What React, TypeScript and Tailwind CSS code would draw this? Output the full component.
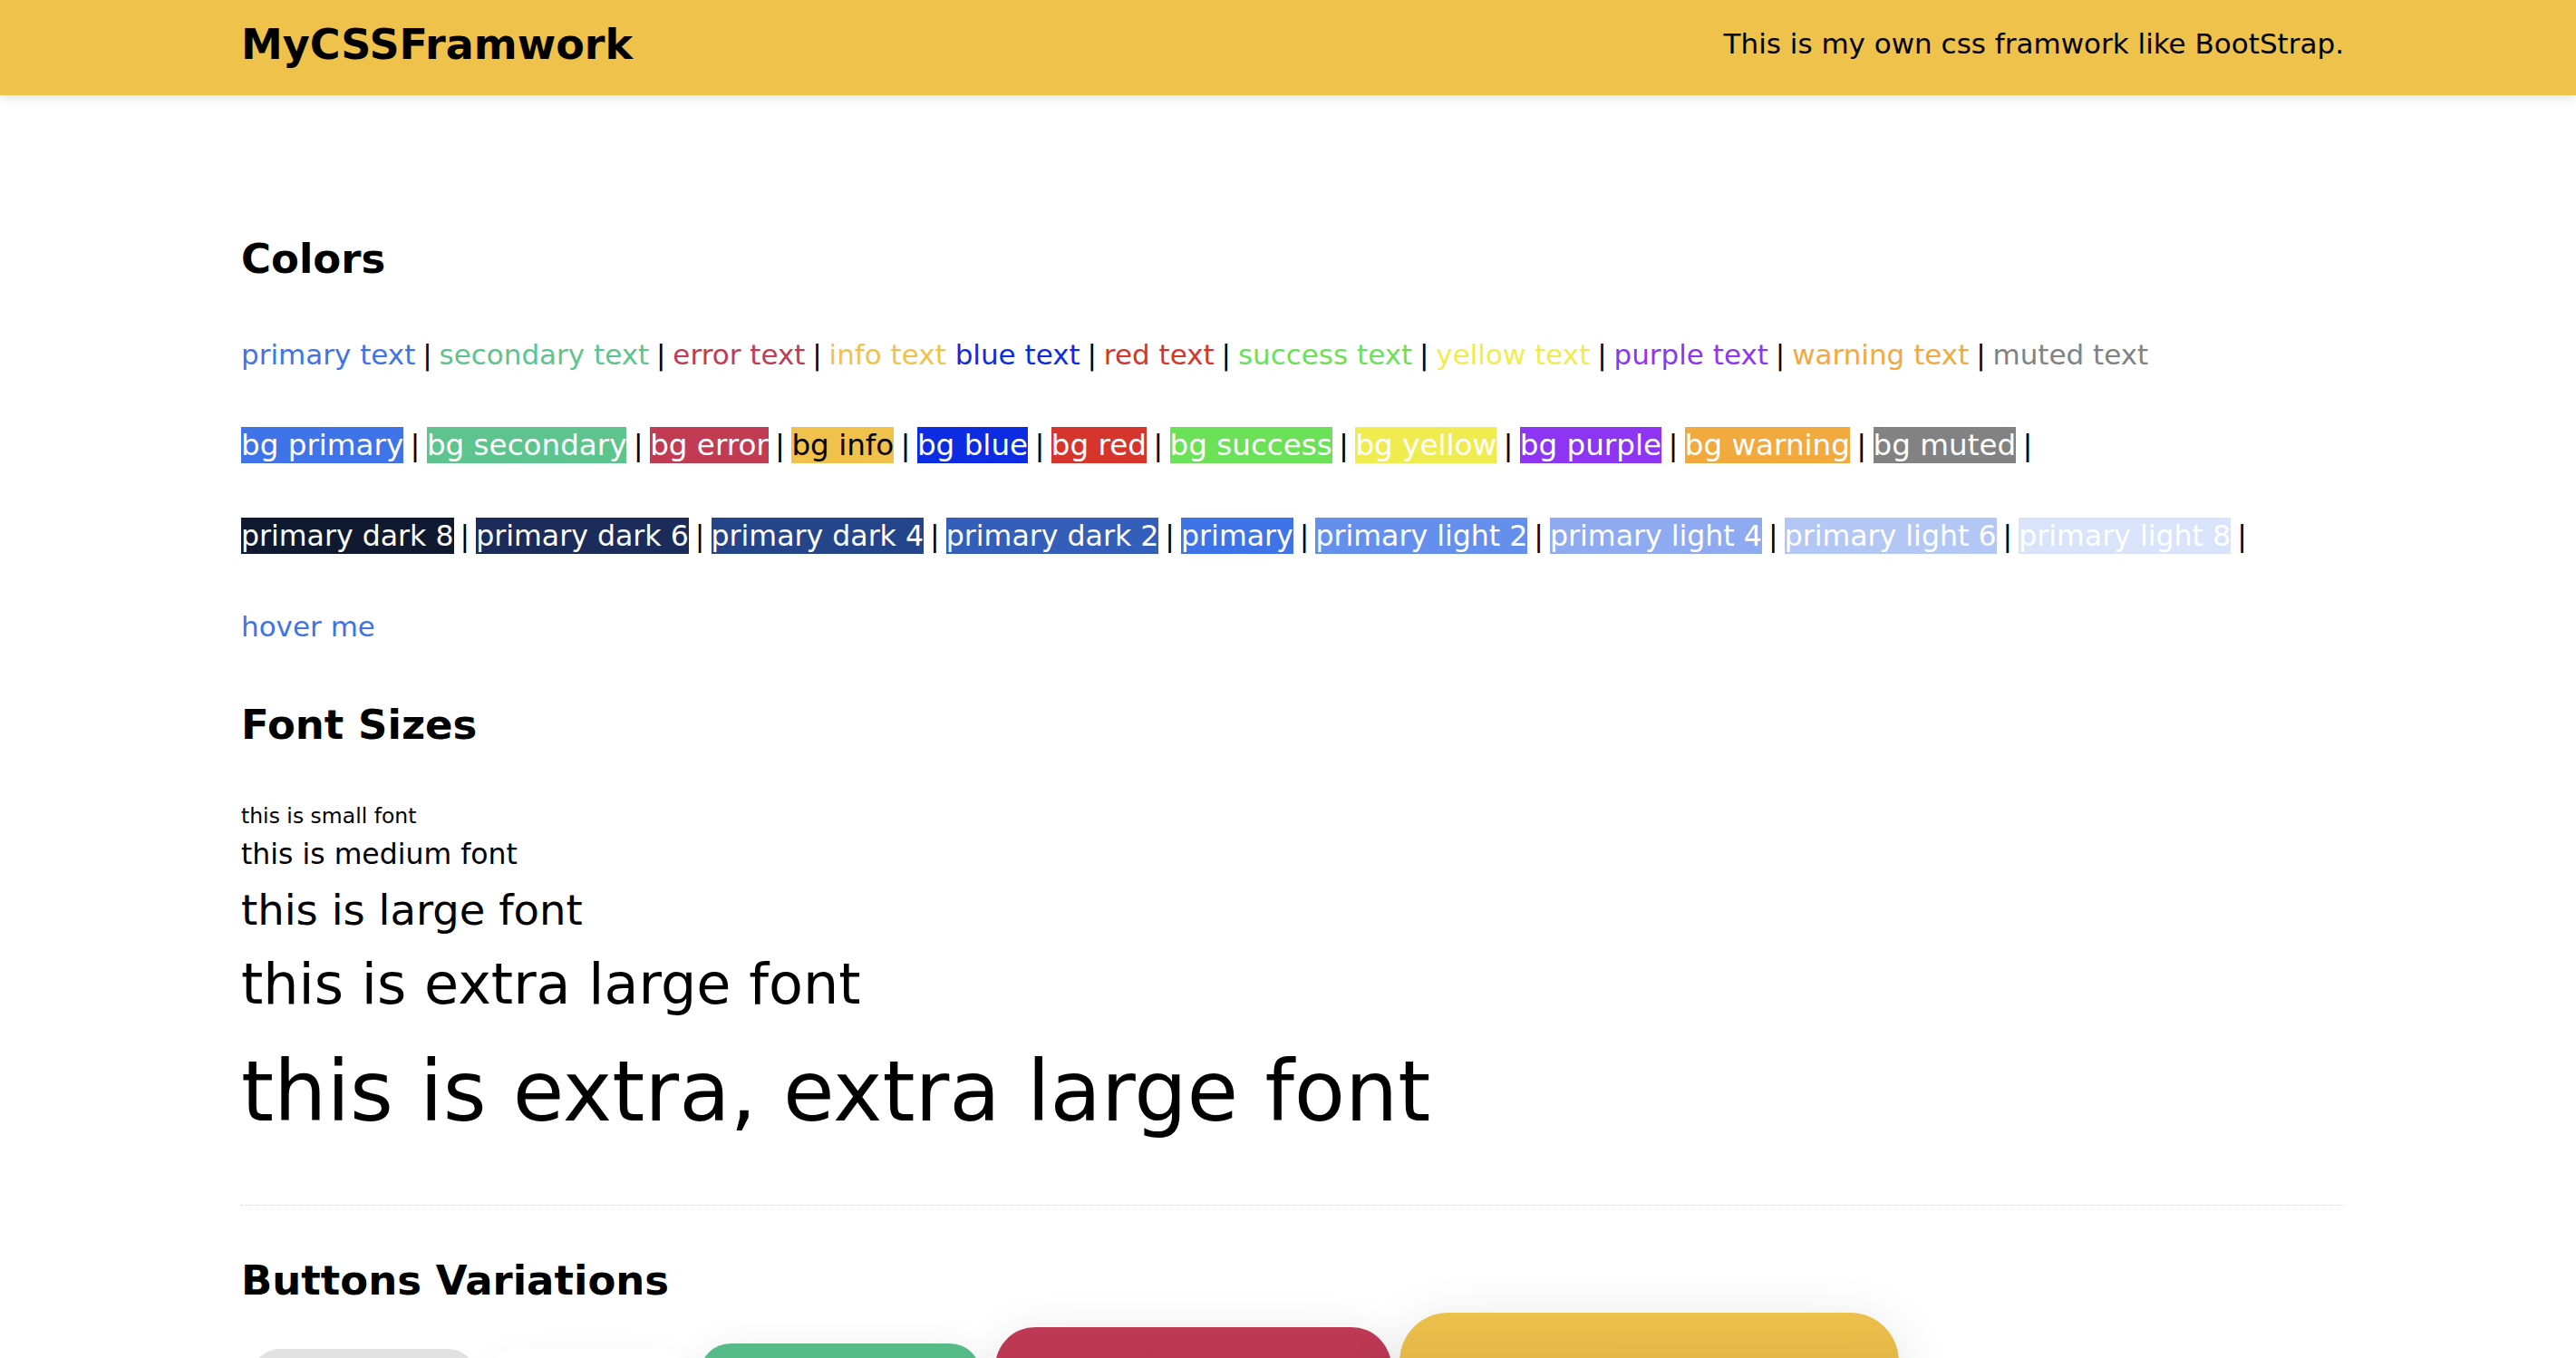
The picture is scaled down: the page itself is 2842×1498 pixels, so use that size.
import React from 'react';

type Swatch = { label: string; cls: string; sep: boolean };

const TEXT_COLORS: Swatch[] = [
    { label: 'primary text', cls: 'text-[#3f74e9]', sep: true },
    { label: 'secondary text', cls: 'text-[#5ec48d]', sep: true },
    { label: 'error text', cls: 'text-[#c13b53]', sep: true },
    { label: 'info text', cls: 'text-[#f0c24b]', sep: false },
    { label: 'blue text', cls: 'text-[#0b2ce0]', sep: true },
    { label: 'red text', cls: 'text-[#d5352b]', sep: true },
    { label: 'success text', cls: 'text-[#6ae157]', sep: true },
    { label: 'yellow text', cls: 'text-[#f0ec50]', sep: true },
    { label: 'purple text', cls: 'text-[#8d35f3]', sep: true },
    { label: 'warning text', cls: 'text-[#f2a93d]', sep: true },
    { label: 'muted text', cls: 'text-[#828282]', sep: false },
];

const BG_COLORS: Swatch[] = [
    { label: 'bg primary', cls: 'bg-[#3f74e9] text-white', sep: true },
    { label: 'bg secondary', cls: 'bg-[#5ec48d] text-white', sep: true },
    { label: 'bg error', cls: 'bg-[#c13b53] text-white', sep: true },
    { label: 'bg info', cls: 'bg-[#f0c24b] text-black', sep: true },
    { label: 'bg blue', cls: 'bg-[#0b2ce0] text-white', sep: true },
    { label: 'bg red', cls: 'bg-[#d5352b] text-white', sep: true },
    { label: 'bg success', cls: 'bg-[#6ae157] text-white', sep: true },
    { label: 'bg yellow', cls: 'bg-[#f0ec50] text-white', sep: true },
    { label: 'bg purple', cls: 'bg-[#8d35f3] text-white', sep: true },
    { label: 'bg warning', cls: 'bg-[#f2a93d] text-white', sep: true },
    { label: 'bg muted', cls: 'bg-[#828282] text-white', sep: true },
];

const SHADES: Swatch[] = [
    { label: 'primary dark 8', cls: 'bg-[#0f1a31] text-white', sep: true },
    { label: 'primary dark 6', cls: 'bg-[#1b2c5b] text-white', sep: true },
    { label: 'primary dark 4', cls: 'bg-[#25458b] text-white', sep: true },
    { label: 'primary dark 2', cls: 'bg-[#335eb9] text-white', sep: true },
    { label: 'primary', cls: 'bg-[#3f74e9] text-white', sep: true },
    { label: 'primary light 2', cls: 'bg-[#658fed] text-white', sep: true },
    { label: 'primary light 4', cls: 'bg-[#8eabf1] text-white', sep: true },
    { label: 'primary light 6', cls: 'bg-[#b3c7f5] text-white', sep: true },
    { label: 'primary light 8', cls: 'bg-[#d9e3fa] text-white', sep: true },
];

const Row: React.FC<{ children: React.ReactNode; size?: string }> = ({ children, size = 'text-[31px]' }) => (
    <div className="flex h-[100px] items-center">
        <p className={`whitespace-nowrap leading-[40px] ${size}`}>{children}</p>
    </div>
);

const SwatchLine: React.FC<{ items: Swatch[]; boxed?: boolean; size: string; sepCls: string }> = ({ items, boxed, size, sepCls }) => (
    <Row size={size}>
        {items.map(item => (
            <React.Fragment key={item.label}>
                <span className={boxed ? `inline-block h-[40px] leading-[40px] ${item.cls}` : item.cls}>{item.label}</span>
                {item.sep ? <span className={`text-black ${sepCls}`}> | </span> : ' '}
            </React.Fragment>
        ))}
    </Row>
);

const Heading: React.FC<{ children: React.ReactNode }> = ({ children }) => (
    <h2 className="flex h-[64px] items-center text-[45px] font-bold leading-none">{children}</h2>
);

const App: React.FC = () => {
    return (
        <div className="h-[1498px] overflow-hidden bg-white text-black font-['DejaVu_Sans',sans-serif]">
            <header className="relative z-10 h-[105px] bg-[#efc24b] shadow-[0_3px_12px_rgba(0,0,0,0.12)]">
                <div className="ml-[266px] flex h-full w-[2320px] items-center justify-between pb-2">
                    <h1 className="text-[46px] font-bold leading-none">MyCSSFramwork</h1>
                    <p className="text-[31px] leading-none">This is my own css framwork like BootStrap.</p>
                </div>
            </header>

            <main className="ml-[266px] w-[2320px]">
                {/* colors */}
                <section className="pt-[148px]">
                    <Heading>Colors</Heading>
                    <div className="mt-[24px]">
                        <SwatchLine items={TEXT_COLORS} size="text-[31px]" sepCls="[word-spacing:-2px]" />
                        <SwatchLine items={BG_COLORS} boxed size="text-[32.6px]" sepCls="[word-spacing:-3px]" />
                        <SwatchLine items={SHADES} boxed size="text-[31.6px]" sepCls="[word-spacing:-3px]" />
                        <Row>
                            <a href="#" className="text-[#3f74e9]">hover me</a>
                        </Row>
                    </div>
                </section>

                {/* font sizes */}
                <section className="mt-[26px]">
                    <Heading>Font Sizes</Heading>
                    <div className="mt-[54px]">
                        <p className="flex h-[32px] items-center text-[23.5px] leading-none">this is small font</p>
                        <p className="flex h-[52px] items-center text-[31.5px] leading-none">this is medium font</p>
                        <p className="flex h-[70px] items-center text-[46.5px] leading-none">this is large font</p>
                        <p className="flex h-[94px] items-center text-[62px] leading-none">this is extra large font</p>
                        <p className="flex h-[144px] items-center text-[92px] leading-none">this is extra, extra large font</p>
                    </div>
                </section>

                <div className="mt-[52px] border-t border-dotted border-[#d9d9d9]" />

                {/* buttons, only their tops fit in the window */}
                <section className="mt-[50px]">
                    <Heading>Buttons Variations</Heading>
                    <div className="mt-[4px] flex h-[164px] items-center">
                        <button aria-label="default button" className="ml-[11px] h-[84px] w-[249px] rounded-[32px] bg-[#e1e1e1]" />
                        <button aria-label="light button" className="ml-[12px] h-[84px] w-[222px] rounded-[32px] bg-white shadow-[0_8px_40px_rgba(0,0,0,0.04)]" />
                        <button aria-label="small button" className="ml-[12px] h-[96px] w-[310px] rounded-[34px] bg-[#57bb87] shadow-[0_8px_40px_rgba(0,0,0,0.10)]" />
                        <button aria-label="medium button" className="ml-[16px] h-[132px] w-[437px] rounded-[44px] bg-linear-to-b from-[#bf3a54] to-[#a92f48] shadow-[0_10px_50px_rgba(0,0,0,0.12)]" />
                        <button aria-label="large button" className="ml-[9px] h-[164px] w-[551px] rounded-[54px] bg-linear-to-b from-[#ecc04b] to-[#cfa53c] shadow-[0_12px_60px_rgba(0,0,0,0.12)]" />
                    </div>
                </section>
            </main>
        </div>
    );
};

export default App;
